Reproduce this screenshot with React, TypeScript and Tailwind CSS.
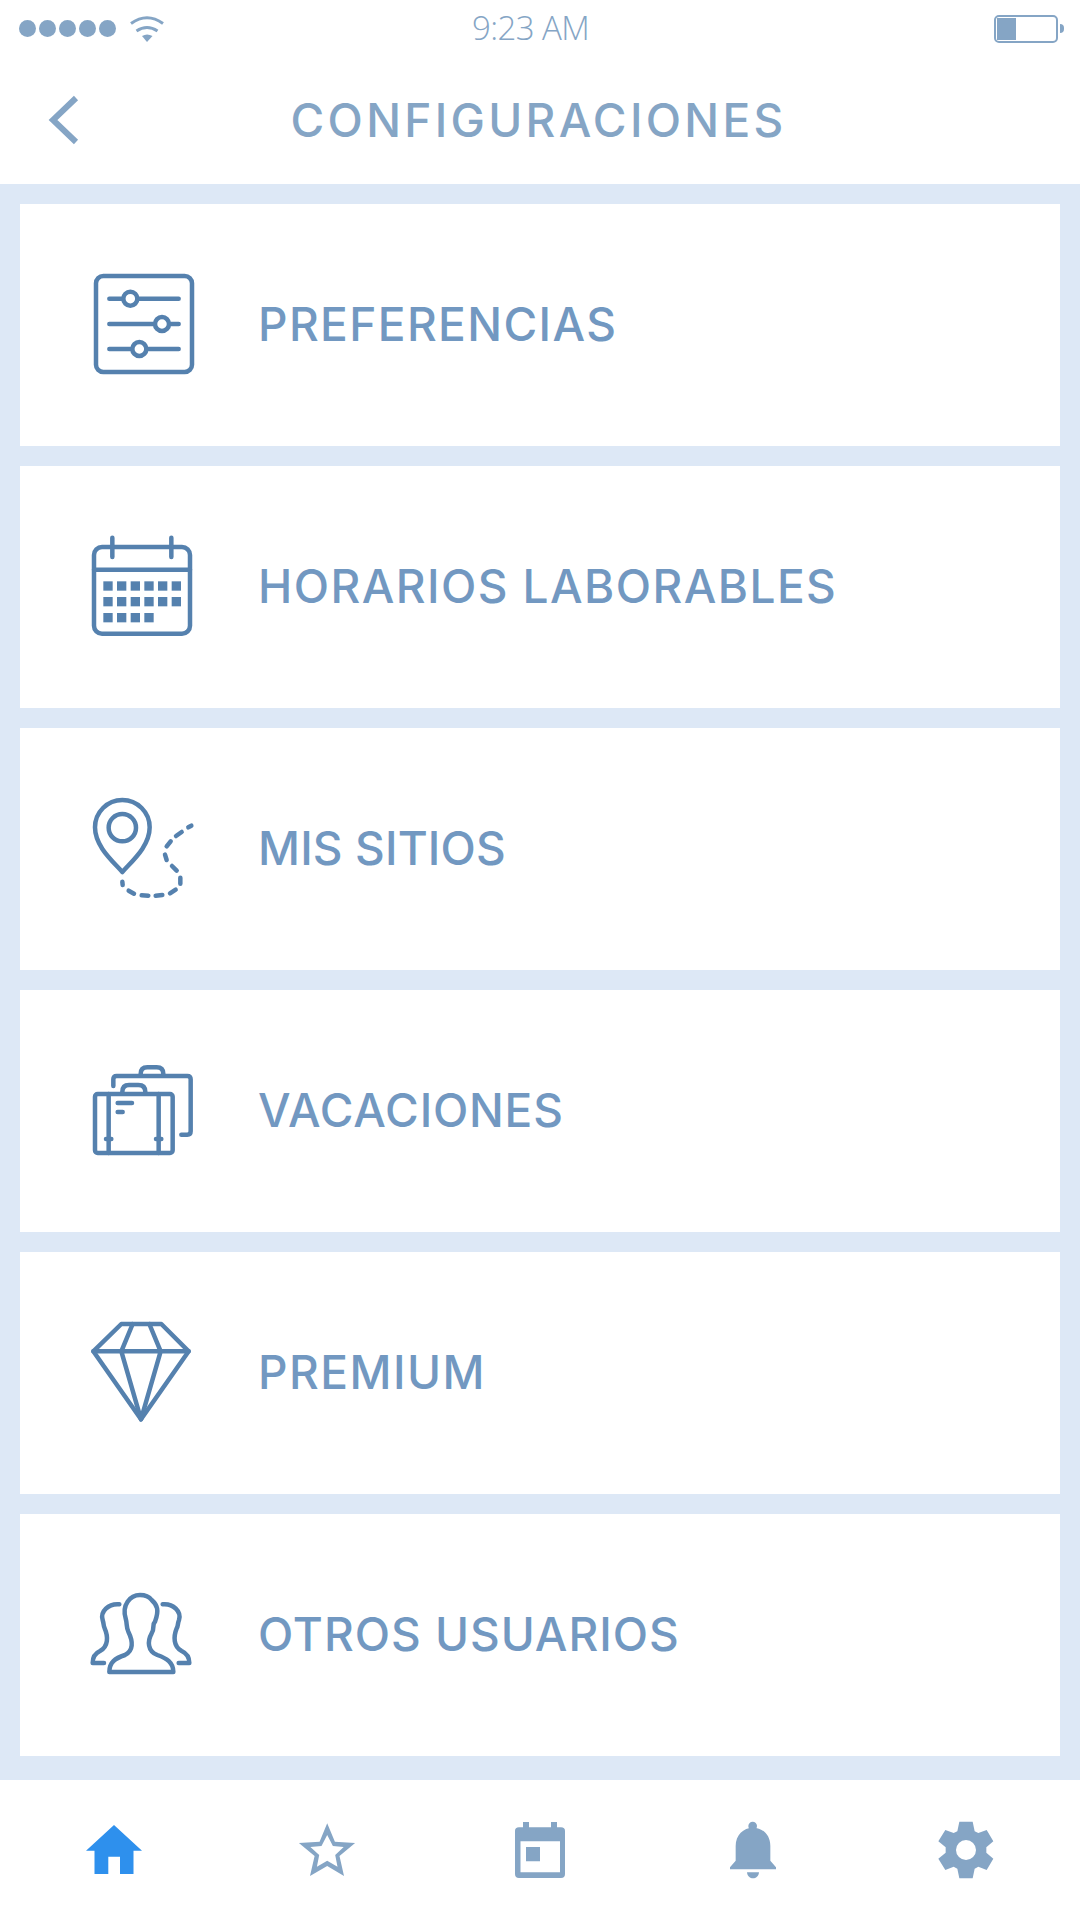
import React from "react";

const S = { fill: "none", stroke: "#5581ae", strokeWidth: 13.5, strokeLinecap: "round", strokeLinejoin: "round" } as const;

function Ico({ y, children }: { y: number; children: React.ReactNode }) {
  return (
    <svg width="150" height="150" viewBox={`0 ${y} 450 450`} className="shrink-0">
      <g {...S}>{children}</g>
    </svg>
  );
}

const Sliders = () => (
  <Ico y={0}>
    <rect x="78" y="78" width="288" height="288" rx="22" />
    <path d="M118 146H326M118 222H326M118 297H326" />
    <circle cx="181" cy="146" r="21" fill="#fff" />
    <circle cx="276" cy="222" r="21" fill="#fff" />
    <circle cx="208" cy="297" r="21" fill="#fff" />
  </Ico>
);

const Cal = () => {
  const xs = [100, 141, 182, 223, 264, 305];
  return (
    <Ico y={-9}>
      <rect x="72" y="96" width="288" height="260" rx="24" />
      <path d="M72 164H360M127 68V126M304 68V126" />
      <g fill="#5581ae" stroke="none">
        {xs.map((x) => <rect key={x} x={x} y="199" width="28" height="28" />)}
        {xs.map((x) => <rect key={x} x={x} y="246" width="28" height="28" />)}
        {xs.slice(0, 4).map((x) => <rect key={x} x={x} y="294" width="28" height="28" />)}
      </g>
    </Ico>
  );
};

const Pin = () => (
  <Ico y={-18}>
    <path d="M157 276C130 245 75 200 75 142A82 82 0 0 1 239 142C239 200 184 245 157 276Z" />
    <circle cx="157" cy="143" r="41" />
    <path d="M355 142L364 137M318 168L335 156M290 199L302 184M285 224L290 240M306 258L320 272M331 293V311M300 340L317 329M257 347L277 345M215 346L235 347M176 332L192 341M157 305L158 315" />
  </Ico>
);

const Cases = () => (
  <Ico y={-42}>
    <path d="M130 108V88Q130 78 140 78H352Q362 78 362 88V244Q362 254 352 254H334" />
    <path d="M212 72Q212 52 232 52H260Q280 52 280 72" />
    <rect x="75" y="132" width="233" height="177" rx="8" />
    <path d="M157 126Q157 105 177 105H205Q226 105 226 126" />
    <path d="M116 132V309M266 132V309M143 159H186M143 186H158M108 267H124M258 267H274" />
  </Ico>
);

const Gem = () => (
  <Ico y={-36}>
    <path d="M154 42H274L356 124L213 328L70 124Z" />
    <path d="M70 124H356M188 42L154 124L213 328L272 124L238 42" />
  </Ico>
);

const People = () => (
  <Ico y={-45}>
    <path d="M118 291H310C310 262 290 250 262 240C232 228 232 198 245 175C255 160 245 150 255 140C268 105 262 90 245 75C235 62 225 60 210 60C180 60 155 90 167 130C172 148 168 155 175 170C190 200 190 228 165 240C135 250 118 262 118 291Z" />
    <path d="M148 88C115 85 90 110 98 135C102 148 100 152 104 160C115 185 115 215 90 228C75 235 68 245 68 264H102" />
    <path d="M278 88C310 85 335 110 327 135C322 148 325 152 320 160C310 185 310 215 335 228C350 235 358 245 358 264H326" />
  </Ico>
);

const rows: [React.ComponentType, string, string][] = [
  [Sliders, "PREFERENCIAS", "tracking-[1.4px]"],
  [Cal, "HORARIOS LABORABLES", "tracking-[1.45px]"],
  [Pin, "MIS SITIOS", "tracking-[0.15px]"],
  [Cases, "VACACIONES", "tracking-[0.8px]"],
  [Gem, "PREMIUM", "tracking-[1.5px]"],
  [People, "OTROS USUARIOS", "tracking-[1px]"],
];

export default function App() {
  return (
    <div className="w-[1080px] h-[1920px] flex flex-col bg-white overflow-hidden font-['Inter',sans-serif]">
      <div className="h-[56px] shrink-0 flex items-center pl-[19px] pr-[16px] pt-px">
        <div className="flex gap-[3px]">
          {[0, 1, 2, 3, 4].map((i) => (
            <div key={i} className="w-[17px] h-[17px] rounded-full bg-[#85a5c5]" />
          ))}
        </div>
        <svg width="34" height="26" viewBox="0 0 34 26" className="ml-[14px]" fill="none" stroke="#85a5c5" strokeWidth="3">
          <path d="M1 7.5Q17 -4 33 7.5" />
          <path d="M6.5 15Q17 8 27.5 15" />
          <path d="M12 20Q17 17 22.5 20L17 26Z" fill="#85a5c5" stroke="none" />
        </svg>
        <span className="ml-[308px] -mt-[3px] text-[33px] font-light leading-none text-[#85a5c5] font-['Open_Sans',sans-serif] tracking-[-0.6px]">9:23 AM</span>
        <div className="ml-auto flex items-center">
          <div className="w-[64px] h-[28px] border-2 border-[#85a5c5] rounded-[5px] p-[1px]">
            <div className="w-[19px] h-full bg-[#85a5c5]" />
          </div>
          <div className="ml-[2px] w-[4px] h-[9px] rounded-r-full bg-[#85a5c5]" />
        </div>
      </div>

      <div className="h-[128px] shrink-0 grid grid-cols-[1fr_auto_1fr] items-center">
        <svg width="32" height="50" viewBox="0 0 32 50" className="ml-[47px]" fill="none" stroke="#85a5c5" strokeWidth="6">
          <path d="M29 3L6 25L29 47" />
        </svg>
        <h1 className="text-[46px] font-medium leading-none text-[#85a5c5] tracking-[3.3px] -mt-px -ml-[3px]">CONFIGURACIONES</h1>
        <div />
      </div>

      <div className="h-[1596px] shrink-0 bg-[#dde8f6] flex flex-col gap-[20px] px-[20px] pt-[20px]">
        {rows.map(([Icon, label, tr]) => (
          <div key={label} className="h-[242px] shrink-0 bg-white flex items-center pl-[50px]">
            <Icon />
            <span className={`ml-[38px] -mt-[3px] text-[46px] font-medium leading-none text-[#7298c1] ${tr}`}>{label}</span>
          </div>
        ))}
      </div>

      <nav className="flex-1 grid grid-cols-[repeat(5,213px)] pl-[7.5px] items-center justify-items-center">
        <svg width="60" height="60" viewBox="0 0 60 60">
          <path d="M30 5L58 30.7H49.5V54H36V36.7H24.3V54H10.5V30.7H2Z" fill="#2e90ed" />
        </svg>
        <svg width="60" height="60" viewBox="0 0 60 60">
          <path fillRule="evenodd" fill="#85a5c5" d="M30.2 3.3L37.9 21.7L58.1 23L42.5 36L47 56L30.2 46L13 56L17.6 36L1.9 23L22.6 21.7ZM30.2 15L24.5 26L13.4 27L22.2 35L19.9 46.7L30.2 40.7L40.5 46.7L38.2 35L46.7 27L35.9 26Z" />
        </svg>
        <svg width="60" height="60" viewBox="0 0 60 60">
          <path fillRule="evenodd" fill="#85a5c5" d="M13 2H19V7.3H41V2H47V7.3H51Q55 7.3 55 11V54Q55 58 51 58H9Q5 58 5 54V11Q5 7.3 9 7.3H13ZM10.5 21.3V52.3H50V21.3ZM16 27H30V41.3H16Z" />
        </svg>
        <svg width="60" height="60" viewBox="369 150 180 180">
          <circle cx="458" cy="168" r="13" fill="#85a5c5" />
          <path d="M407 272V228C407 195 430 173 459 173C488 173 511 195 511 228V272L528 292V298H390V292Z" fill="#85a5c5" />
          <path d="M441 307H477C475 331 443 331 441 307Z" fill="#85a5c5" />
        </svg>
        <svg width="60" height="60" viewBox="1010 150 180 180">
          <path fillRule="evenodd" fill="#85a5c5" d="M1080 155H1120L1126 184L1137 189L1162 180L1182 214L1161 232V248L1182 266L1162 300L1137 290L1126 296L1120 325H1080L1074 296L1063 290L1038 300L1017 266L1039 248V232L1017 214L1038 180L1063 189L1074 184ZM1100 210A30 30 0 1 0 1100 270A30 30 0 1 0 1100 210Z" />
        </svg>
      </nav>
    </div>
  );
}
